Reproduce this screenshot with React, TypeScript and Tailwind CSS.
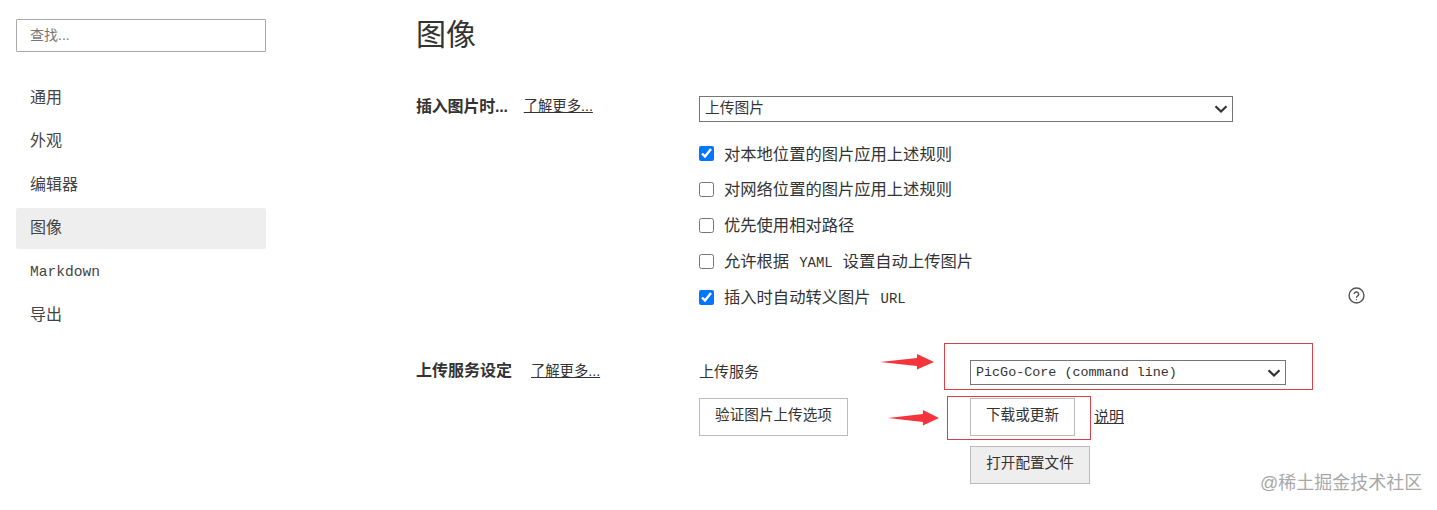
const sans = { fontFamily: '"Liberation Sans", "Noto Sans CJK SC", sans-serif' };
const MONO = '"Liberation Mono", "Noto Sans CJK SC", monospace';

function Arrow({ width }: { width: number }) {
  return (
    <svg width={width} height="16" viewBox="0 0 54 16" preserveAspectRatio="none" className="block">
      <path d="M0 8 L37 4 L37 0 L54 8 L37 15.5 L37 12 Z" fill="#f5333a" />
    </svg>
  );
}

function Chevron() {
  return (
    <svg width="14" height="8" viewBox="0 0 14 8" fill="none" stroke="#333" strokeWidth="2.2" className="absolute right-[5px] top-[9px] pointer-events-none">
      <path d="M1.5 1.2 L7 6.5 L12.5 1.2" />
    </svg>
  );
}

function Check({ checked, children }: { checked?: boolean; children: React.ReactNode }) {
  return (
    <label className="flex items-center h-[35.8px] text-[16.3px] text-[#333]">
      <input type="checkbox" defaultChecked={checked} className="w-[15px] h-[15px] m-0 mr-[10px] accent-[#0075ff]" />
      <span>{children}</span>
    </label>
  );
}

const Mono = ({ children, last }: { children: React.ReactNode; last?: boolean }) => (
  <span style={{ fontFamily: MONO }} className={`text-[14px] ml-[10px] ${last ? "" : "mr-[10px]"}`}>{children}</span>
);

const btn = "h-[38px] pb-[3px] border border-[#bbb] text-[14.6px] text-[#333] flex items-center justify-center";
const nav = ["通用", "外观", "编辑器", "图像", "Markdown", "导出"];

export default function App() {
  return (
    <div style={sans} className="relative flex w-[1437px] h-[510px] overflow-hidden bg-white text-[#333]">
      <aside className="w-[250px] ml-[16px] pt-[19px] shrink-0">
        <div className="h-[33px] border border-[#aaa] rounded-[1px] pl-[13px] flex items-center text-[14px] text-[#777]">查找...</div>
        <ul className="mt-[25.5px]">
          {nav.map((n) => (
            <li
              key={n}
              style={n === "Markdown" ? { fontFamily: MONO, fontSize: 14.6, paddingTop: 3 } : undefined}
              className={`h-[41px] mb-[2.4px] flex items-center pl-[14px] text-[16px] text-[#444] rounded-[2px] ${n === "图像" ? "bg-[#eeeeee]" : ""}`}
            >
              {n}
            </li>
          ))}
        </ul>
      </aside>

      <main className="ml-[150px] flex-1 pt-[13px]">
        <h1 className="text-[30px] leading-[44px] text-[#333] font-normal">图像</h1>

        <section className="flex mt-[39px]">
          <div className="w-[283px] shrink-0 flex items-center h-[22px] text-[16px]">
            <b className="font-bold tracking-[-0.2px]">插入图片时...</b>
            <a className="ml-[16px] text-[14.3px] underline">了解更多...</a>
          </div>
          <div className="w-[534px]">
            <div className="relative">
              <select className="block w-full h-[26px] appearance-none border border-[#767676] text-[14.75px] text-[#333] pl-[5px] pb-[3px]">
                <option>上传图片</option>
              </select>
              <Chevron />
            </div>
            <div className="mt-[14px]">
              <Check checked>对本地位置的图片应用上述规则</Check>
              <Check>对网络位置的图片应用上述规则</Check>
              <Check>优先使用相对路径</Check>
              <Check>允许根据<Mono>YAML</Mono>设置自动上传图片</Check>
              <Check checked>插入时自动转义图片<Mono last>URL</Mono></Check>
            </div>
          </div>
          <div className="w-[131.5px] flex justify-end items-end h-[208px]">
            <svg width="17" height="17" viewBox="0 0 24 24" fill="none" stroke="#555" strokeWidth="2" strokeLinecap="round" strokeLinejoin="round" className="shrink-0">
              <circle cx="12" cy="12" r="10.5" />
              <path d="M8.8 9.2a3.3 3.3 0 0 1 6.4 1c0 2.2-3.2 2.6-3.2 4.3" />
              <path d="M12 17.8h.01" />
            </svg>
          </div>
        </section>

        <section className="flex mt-[45px]">
          <div className="w-[283px] shrink-0 flex items-center h-[23px] text-[16px]">
            <b className="font-bold">上传服务设定</b>
            <a className="ml-[19px] text-[14.3px] underline">了解更多...</a>
          </div>
          <div className="grid grid-cols-[149px_122px_auto] gap-y-[10px] items-start">
            <div className="text-[15px] col-span-2 h-[25px] flex items-center w-[271px]">上传服务</div>
            <div className="relative w-[316px] mb-[3px]">
              <select style={{ fontFamily: MONO }} className="block w-full h-[25px] appearance-none border border-[#767676] text-[13.4px] text-[#333] pl-[5px] pt-[1px]">
                <option>PicGo-Core (command line)</option>
              </select>
              <Chevron />
              <div className="absolute left-[-26px] top-[-17px] w-[369px] h-[47px] border border-[#d9404a]" />
              <div className="absolute left-[-90px] top-[-6px]"><Arrow width={54} /></div>
            </div>
            <button className={`${btn} w-[149px]`}>验证图片上传选项</button>
            <div />
            <div className="relative flex items-center">
              <button className={`${btn} w-[105px]`}>下载或更新</button>
              <a className="ml-[19px] text-[15px] underline">说明</a>
              <div className="absolute left-[-23px] top-[-2px] w-[144px] h-[44px] border border-[#d9404a]" />
              <div className="absolute left-[-82px] top-[12px]"><Arrow width={51} /></div>
            </div>
            <div className="col-span-2" />
            <button className={`${btn} w-[120px] bg-[#eeeeee]`}>打开配置文件</button>
          </div>
        </section>
      </main>

      <div className="absolute left-[1260px] top-[472px] text-[18px] leading-[22px] text-[#a8a8a8]">@稀土掘金技术社区</div>
    </div>
  );
}
